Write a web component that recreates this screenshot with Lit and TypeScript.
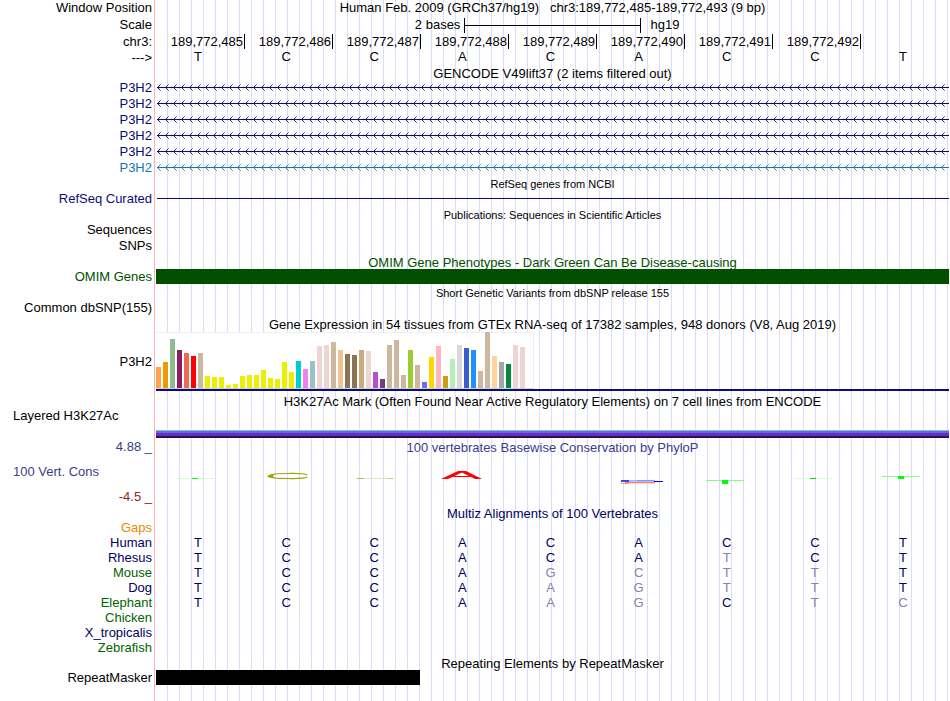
import { LitElement, html, css, svg } from "lit";
import { customElement } from "lit/decorators.js";

const POSITIONS = ["485", "486", "487", "488", "489", "490", "491", "492"];
const REFERENCE = "TCCACACCT";

/* One entry per tissue: median expression (px) and tissue colour. */
const TISSUES: [number, string][] = [
  [21, "#ffa54f"], [26, "#ee9a00"], [49, "#8fbc8f"], [38, "#8b1c62"], [35, "#ee6a50"],
  [32, "#ff0000"], [35, "#cdb79e"], [12, "#eeee00"], [11, "#eeee00"], [11, "#eeee00"],
  [3, "#eeee00"], [4, "#eeee00"], [12, "#eeee00"], [13, "#eeee00"], [13, "#eeee00"],
  [18, "#eeee00"], [10, "#eeee00"], [9, "#eeee00"], [26, "#eeee00"], [16, "#eeee00"],
  [27, "#00cdcd"], [19, "#ee82ee"], [27, "#9ac0cd"], [42, "#eed5d2"], [43, "#eed5d2"],
  [46, "#cdb79e"], [38, "#eec591"], [34, "#8b7355"], [33, "#8b7355"], [38, "#cdaa7d"],
  [37, "#eed5d2"], [16, "#b452cd"], [9, "#7a378b"], [43, "#cdb79e"], [48, "#cdb79e"],
  [13, "#cdb79e"], [38, "#9acd32"], [23, "#cdb79e"], [6, "#7a67ee"], [31, "#ffd700"],
  [42, "#ffb6c1"], [12, "#cd9b1d"], [29, "#b4eeb4"], [43, "#d9d9d9"], [40, "#3a5fcd"],
  [38, "#1e90ff"], [17, "#cdb79e"], [56, "#cdb79e"], [32, "#ffd39b"], [26, "#a6a6a6"],
  [24, "#008b45"], [43, "#eed5d2"], [41, "#eed5d2"], [0, "#ff00ff"],
];

/* Lower-case letters are bases that differ from the human sequence. */
const SPECIES: [string, string, string][] = [
  ["Gaps", "gaps", ""],
  ["Human", "navy", "TCCACACCT"],
  ["Rhesus", "navy", "TCCACAtCT"],
  ["Mouse", "green", "TCCAgcttT"],
  ["Dog", "navy", "TCCAagttT"],
  ["Elephant", "green", "TCCAagCtc"],
  ["Chicken", "green", ""],
  ["X_tropicalis", "navy", ""],
  ["Zebrafish", "green", ""],
];

const LOGOS = [
  svg`<rect x="21" y="16" width="37" height="1" fill="#ccffcc"/><rect x="36" y="16" width="6" height="1" fill="#00ff00"/>`,
  svg`<path d="M63 13 C60 11 50 11.500 44 11.500 C34 11.500 26 12 26 14 C26 16 34 16.500 44 16.500 C50 16.500 60 17 63 15" fill="none" stroke="#a3a300" stroke-width="1.200"/><path d="M31 11.500 L25 13 L23 14 L25 15.500 L31 16.500 L29 14 Z" fill="#a3a300"/>`,
  svg`<rect x="24" y="16" width="38" height="1" fill="#e3e3b8"/><rect x="25" y="16" width="7" height="1" fill="#b9b960"/><rect x="56" y="16" width="5" height="1" fill="#cccc90"/>`,
  svg`<path d="M21 17 L38 9 H46 L62 17 H55 L42 10.500 L28 17 Z" fill="#ff0000"/><rect x="32" y="14" width="20" height="1" fill="#ff0000"/>`,
  svg``,
  svg`<rect x="24" y="18" width="34" height="2" fill="#b4b4ff"/><rect x="24" y="18" width="8" height="2" fill="#4040ff"/><rect x="40" y="18" width="17" height="1" fill="#9090ff"/><rect x="57" y="19" width="9" height="1" fill="#0000ff"/><rect x="28" y="20" width="30" height="1" fill="#ff8080"/><rect x="24" y="21" width="8" height="1" fill="#c8b850"/><rect x="32" y="21" width="26" height="1" fill="#f5dcc0"/>`,
  svg`<rect x="21" y="18" width="38" height="1" fill="#80ff80"/><rect x="37" y="18" width="6" height="4" fill="#00ff00"/>`,
  svg`<rect x="21" y="16" width="38" height="1" fill="#d8ffd8"/><rect x="37" y="16" width="6" height="1" fill="#00e000"/>`,
  svg`<rect x="21" y="14" width="38" height="1" fill="#80ff80"/><rect x="37" y="14" width="6" height="3" fill="#00ff00"/>`,
];

@customElement("app-root")
export class AppRoot extends LitElement {
  static styles = css`
    :host {
      display: block;
      font: 13px/16px "Liberation Sans", Arial, sans-serif;
      color: #000;
      background: #fff;
    }
    .browser {
      box-sizing: border-box;
      min-height: 100vh;
      padding-right: 1px;
      background:
        linear-gradient(#ffb4b4, #ffb4b4) 154px 0 / 1px 100% no-repeat,
        repeating-linear-gradient(to right, transparent 0 11px, #dcdcf8 11px 12px) 156px 0 / calc(100% - 156px) 100% no-repeat;
    }
    .track {
      display: grid;
      grid-template-columns: 152px minmax(0, 1fr);
      column-gap: 4px;
      height: 16px;
    }
    .label { text-align: right; white-space: nowrap; }
    .label.left { text-align: left; padding-left: 13px; }
    .position { text-align: center; white-space: pre; }
    .title {
      margin: 0;
      padding-left: 156px;
      height: 15px;
      font-size: 13px;
      line-height: 18px;
      font-weight: 400;
      text-align: center;
      white-space: nowrap;
    }
    .title.small { font-size: 11px; line-height: 16px; }
    .title.tight { height: 14px; line-height: 16px; }
    .title.full { height: 16px; }
    .title.tall { height: 18px; line-height: 22px; }
    .navy { color: #000064; }
    .gene { color: #0c0c78; }
    .alt { color: #1874b4; }
    .green { color: #006400; }
    .omim { color: #005000; }
    .gaps { color: #e68a00; }
    .phylo { color: #3c3c8c; }
    .negative { color: #8c2828; }

    .scale { height: 18px; line-height: 18px; }
    .ruler {
      display: grid;
      grid-template-columns: repeat(18, minmax(0, 1fr));
      align-items: center;
      line-height: 16px;
    }
    .ruler .from { grid-column: span 7; text-align: right; padding-right: 4px; }
    .ruler .rule {
      grid-column: span 4;
      height: 15px;
      border: solid #000;
      border-width: 0 1px;
      background: linear-gradient(#000, #000) 0 7px / 100% 1px no-repeat;
    }
    .ruler .to { grid-column: span 7; padding-left: 10px; }
    .cells {
      display: grid;
      grid-template-columns: repeat(9, minmax(0, 1fr));
      text-align: center;
    }
    .cells .base { padding-right: 4px; line-height: 14px; }
    .cells.ticks { margin-left: 1px; text-align: right; }
    .ticks .tick { height: 15px; padding-right: 1px; border-right: 1px solid #000; }

    .arrows { display: block; width: 100%; height: 16px; }
    .line { height: 1px; margin: 7px 0 0 1px; background: #0c0c78; }
    .bar { height: 15px; background: #005000; }
    .bar.repeat { width: calc(100% / 3); background: #000; }

    .expression { height: 59px; line-height: 18px; align-items: center; }
    .gtex { align-self: stretch; border-bottom: 2px solid #0c0c78; }
    .tissues {
      box-sizing: border-box;
      display: flex;
      align-items: flex-end;
      gap: 2px;
      width: 378px;
      height: 57px;
      background: #fff;
      border-bottom: 1px solid #d0d0d0;
      box-shadow: inset -1px 1px #f0f0f0;
    }
    .tissue { width: 5px; }
    .histone { height: 29px; line-height: 14px; margin-bottom: 2px; }
    .marks {
      align-self: end;
      height: 8px;
      background: linear-gradient(#6ec8f0 0 1px, #7860d0 1px 3px, #6030d0 3px 6px, #301040 6px 8px);
    }
    .conservation { height: 65px; margin-bottom: 1px; }
    .levels {
      display: flex;
      flex-direction: column;
      justify-content: space-between;
      line-height: 14px;
      padding-bottom: 1px;
    }
    .conservation .title { padding: 0; height: 22px; line-height: 16px; }
    .logo { display: block; width: 88px; height: 32px; }

    .alignment {
      width: 100%;
      table-layout: fixed;
      border-collapse: collapse;
      line-height: 15px;
    }
    .alignment th, .alignment td { padding: 0 4px 0 0; height: 15px; font-weight: 400; text-align: center; }
    .alignment th { width: 152px; text-align: right; }
    .alignment td { color: #000064; }
    .alignment td.differs { color: #8282b4; }
  `;

  private geneRow(tone: string, index: number) {
    const id = `chevrons-${index}`;
    return html`<div class="track ${tone}">
      <div class="label">P3H2</div>
      <svg class="arrows" aria-hidden="true">
        <defs>
          <pattern id=${id} width="8" height="16" patternUnits="userSpaceOnUse">
            <path d="M2 6 h1 v1 h-1 Z M2 8 h1 v1 h-1 Z M3 5 h1 v1 h-1 Z M3 9 h1 v1 h-1 Z" fill="currentColor" opacity="0.9" />
            <path d="M4 4 h1 v1 h-1 Z M4 10 h1 v1 h-1 Z" fill="currentColor" opacity="0.5" />
          </pattern>
        </defs>
        <rect width="100%" height="16" fill="url(#${id})" />
        <rect x="1" y="7" width="100%" height="1" fill="currentColor" />
      </svg>
    </div>`;
  }

  render() {
    return html`<main class="browser">
      <div class="track">
        <div class="label">Window Position</div>
        <div class="position">Human Feb. 2009 (GRCh37/hg19)   chr3:189,772,485-189,772,493 (9 bp)</div>
      </div>
      <div class="track scale">
        <div class="label">Scale</div>
        <div class="ruler"><span class="from">2 bases</span><span class="rule"></span><span class="to">hg19</span></div>
      </div>
      <div class="track">
        <div class="label">chr3:</div>
        <div class="cells ticks">${POSITIONS.map((p) => html`<div class="tick">189,772,${p}</div>`)}</div>
      </div>
      <div class="track">
        <div class="label">---&gt;</div>
        <div class="cells">${[...REFERENCE].map((b) => html`<div class="base">${b}</div>`)}</div>
      </div>

      <h2 class="title tight">GENCODE V49lift37 (2 items filtered out)</h2>
      ${["gene", "gene", "gene", "gene", "gene", "alt"].map((tone, i) => this.geneRow(tone, i))}

      <h2 class="title small">RefSeq genes from NCBI</h2>
      <div class="track gene"><div class="label">RefSeq Curated</div><div class="line"></div></div>

      <h2 class="title small">Publications: Sequences in Scientific Articles</h2>
      <div class="track"><div class="label">Sequences</div></div>
      <div class="track"><div class="label">SNPs</div></div>

      <h2 class="title omim">OMIM Gene Phenotypes - Dark Green Can Be Disease-causing</h2>
      <div class="track omim"><div class="label">OMIM Genes</div><div class="bar"></div></div>

      <h2 class="title small">Short Genetic Variants from dbSNP release 155</h2>
      <div class="track"><div class="label">Common dbSNP(155)</div></div>

      <h2 class="title full">Gene Expression in 54 tissues from GTEx RNA-seq of 17382 samples, 948 donors (V8, Aug 2019)</h2>
      <div class="track expression">
        <div class="label">P3H2</div>
        <div class="gtex">
          <div class="tissues">
            ${TISSUES.map(([h, c]) => html`<span class="tissue" style="height:${h}px;background:${c}"></span>`)}
          </div>
        </div>
      </div>

      <h2 class="title tall">H3K27Ac Mark (Often Found Near Active Regulatory Elements) on 7 cell lines from ENCODE</h2>
      <div class="track histone"><div class="label left">Layered H3K27Ac</div><div class="marks"></div></div>

      <div class="track conservation phylo">
        <div class="levels">
          <div class="label">4.88 _</div>
          <div class="label left">100 Vert. Cons</div>
          <div class="label negative">-4.5 _</div>
        </div>
        <div>
          <h2 class="title">100 vertebrates Basewise Conservation by PhyloP</h2>
          <div class="cells">
            ${LOGOS.map((mark) => html`<svg class="logo" viewBox="0 0 88 32" aria-hidden="true">${mark}</svg>`)}
          </div>
        </div>
      </div>

      <h2 class="title tight navy">Multiz Alignments of 100 Vertebrates</h2>
      <table class="alignment">
        ${SPECIES.map(
          ([name, tone, bases]) => html`<tr>
            <th scope="row" class=${tone}>${name}</th>
            ${bases.padEnd(9).split("").map(
              (b) => html`<td class=${b === b.toUpperCase() ? "same" : "differs"}>${b.trim().toUpperCase()}</td>`
            )}
          </tr>`
        )}
      </table>

      <h2 class="title">Repeating Elements by RepeatMasker</h2>
      <div class="track"><div class="label">RepeatMasker</div><div class="bar repeat"></div></div>
    </main>`;
  }
}
